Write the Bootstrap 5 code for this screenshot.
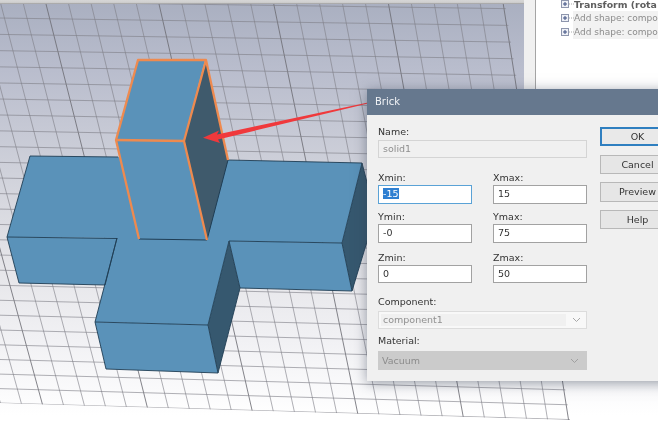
<!doctype html>
<html lang="en">
<head>
<meta charset="utf-8">
<title>Brick</title>
<link href="https://cdn.jsdelivr.net/npm/bootstrap@5.3.0/dist/css/bootstrap.min.css" rel="stylesheet">
<style>
html,body{margin:0;height:100%;overflow:hidden;background:#fff}
.stage{width:658px;height:429px;overflow:hidden;font-family:"DejaVu Sans",sans-serif;font-size:9.5px;
  background:linear-gradient(180deg,#a9afc0 0,#b9bdcd 70px,#cfd1da 170px,#e4e4e8 260px,#f1f1f4 340px,#fbfbfc 395px,#fff 415px)}
.top-rule{height:4px;background:linear-gradient(180deg,#d6d6d6 0,#d0d0d0 60%,#9a9a9a 100%)}
.scene{width:658px;height:425px;filter:blur(.45px)}
.side-pane{top:0;left:524px;width:134px;height:150px;background:#f0f0f0}
.side-inner{margin-left:11px;height:100%;background:#fff;border-left:1px solid #a4a4a4;padding-left:38px;color:#8c8c8c;font-size:9px;filter:blur(.25px)}
.tree-row{height:14px;line-height:14px;white-space:nowrap;overflow:hidden}
.tree-row.strong{font-weight:700;font-size:9.400px;color:#5e5e5e;height:11px;line-height:9px}
.tree-row.shaded{background:#f2f2f2;margin-left:-1px;padding-left:1px}
.plus{position:absolute;left:25px;width:13px;height:9px}
.plus-1{top:0}.plus-2{top:14px}.plus-3{top:28px}
.brick-win{left:367px;top:89px;width:310px;background:#f0f0f0;box-shadow:0 2px 12px rgba(50,60,80,.5);color:#333}
.brick-title{height:26px;background:#66788e;color:#f1f3f6;font-size:10px;line-height:26px;padding-left:8px;filter:blur(.25px)}
.brick-body{padding:10px 0 11px 11px;filter:blur(.25px)}
.fields{width:209px}
.fields .row{--bs-gutter-x:21px}
.cap{display:block;height:14px;line-height:14px;margin-bottom:0}
.fields .form-control,.fields .form-select{font-size:9.5px;border-radius:0;min-height:0;padding:0 4px;height:19px;line-height:16px;color:#333;background-image:none;border:1px solid #a2a2a2;background-color:#fff;box-shadow:none}
.fields .low{height:18px}
.name-gap{margin-bottom:13px}.x-gap{margin-bottom:6px}.y-gap{margin-bottom:8px}.z-gap{margin-bottom:12px}.comp-gap{margin-bottom:5px}
.cap.name-cap{margin-bottom:1px}.cap.comp-cap{margin-bottom:2px}.cap.mat-cap{margin-bottom:3px}
.fields .is-off{background-color:#f0f0f0;border-color:#d4d4d4;color:#8f8f8f}
.fields .is-hot{border-color:#5aa2d6}
.pick{background:#2f7fd1;color:#fff}
.fields .drop-a{background-color:#f8f8f8;border-color:#dcdcdc;color:#909090;padding:2px 2px;line-height:12px}
.drop-fill{background:#f0f0f0;height:100%;flex:1;padding-left:2px;margin-right:2px}
.fields .drop-b{background-color:#cbcbcb;border-color:#cbcbcb;color:#8c8c8c;padding-left:3px}
.chev{width:9px;height:6px;margin:0 3px 0 4px;flex:none}
.actions{margin-left:13px;margin-top:2px;width:75px}
.actions .btn{width:75px;padding:0;font-size:9.5px;border-radius:0;background:#e6e6e6;border:1px solid #b8b8b8;color:#333;line-height:16px;text-align:center}
.actions .btn-a{height:19px;margin-bottom:9px;background:#e9e9e9;border:2px solid #2f7fc0;line-height:15px}
.actions .btn-b{height:19px;margin-bottom:8px}
.actions .btn-c{height:20px;margin-bottom:8px}
.actions .btn-d{height:19px}
</style>
</head>
<body>
<div class="stage position-relative">
  <div class="top-rule"></div>
  <svg class="scene d-block" viewBox="0 4 658 425" xmlns="http://www.w3.org/2000/svg">
    <defs><clipPath id="floor"><polygon points="-2,4 505,4 570,420 -2,403"/></clipPath></defs>
    <g id="grid" clip-path="url(#floor)" fill="none"></g>
    <!-- cross body -->
    <polygon points="229,241 342,243 352,291 240,288" fill="#5a92b9"/>
    <polygon points="7,237 117,238 105,285 19,283" fill="#5a92b9"/>
    <polygon points="95,322 208,325 218,373 106,369" fill="#5a92b9"/>
    <polygon points="229,241 240,288 218,373 208,325" fill="#36586f"/>
    <polygon points="342,243 352,291 369,235 369,190 362,163" fill="#36586f"/>
    <polygon points="30,156 118,157 228,160 362,163 342,243 229,241 208,325 95,322 117,238 7,237" fill="#5a92b9"/>
    <g fill="none" stroke="#1f3d54" stroke-width=".9">
      <path d="M7,237 30,156 118,157M228,160 362,163"/>
      <path d="M7,237 117,238.500M117,238 105,285M7,237 19,283 105,285"/>
      <path d="M229,241 342,243M342,243 352,291 240,288M342,243 362,163 369,190M352,291 369,235"/>
      <path d="M229,241 240,288 218,373 208,325M229,241 208,325"/>
      <path d="M95,322 208,325M95,322 117,238M95,322 106,369 218,373"/>
    </g>
    <!-- selected block -->
    <polygon points="138,60 205,60 184,140 116,140" fill="#5a92b9"/>
    <polygon points="116,140 184,140 207,240 139,239" fill="#5a92b9"/>
    <polygon points="206,61 228,160 207,240 184,140" fill="#3f5a6c"/>
    <path d="M139,239 207,240 228,160" fill="none" stroke="#1f3d54" stroke-width="1"/>
    <g fill="none" stroke="#ee8a4f" stroke-width="2.300" stroke-linejoin="round">
      <path d="M139,239 116,140 138,60 206,60 228,160"/>
      <path d="M116,140 184,141 206,60M184,141 207,240"/>
    </g>
    <!-- pointer -->
    <polygon points="203,137.700 219,130.500 217,134.500 368,102.500 368,103.500 218,139.500 220,143" fill="#f0393c"/>
  </svg>

  <aside class="side-pane position-absolute">
    <div class="side-inner">
      <svg class="plus plus-1" viewBox="0 0 13 9" xmlns="http://www.w3.org/2000/svg"><rect x=".5" y=".5" width="7" height="7" fill="#eef0f6" stroke="#8e96ad"/><path d="M2 4h4M4 2v4" stroke="#3d4f80"/><path d="M8 4h5" stroke="#aaa" stroke-dasharray="1 1"/></svg>
      <svg class="plus plus-2" viewBox="0 0 13 9" xmlns="http://www.w3.org/2000/svg"><rect x=".5" y=".5" width="7" height="7" fill="#eef0f6" stroke="#8e96ad"/><path d="M2 4h4M4 2v4" stroke="#3d4f80"/><path d="M8 4h5" stroke="#aaa" stroke-dasharray="1 1"/></svg>
      <svg class="plus plus-3" viewBox="0 0 13 9" xmlns="http://www.w3.org/2000/svg"><rect x=".5" y=".5" width="7" height="7" fill="#eef0f6" stroke="#8e96ad"/><path d="M2 4h4M4 2v4" stroke="#3d4f80"/><path d="M8 4h5" stroke="#aaa" stroke-dasharray="1 1"/></svg>
      <div class="tree-row strong">Transform (rota</div>
      <div class="tree-row shaded">Add shape: compo</div>
      <div class="tree-row shaded">Add shape: compo</div>
    </div>
  </aside>

  <section class="brick-win position-absolute">
    <div class="brick-title">Brick</div>
    <div class="brick-body d-flex align-items-start">
      <div class="fields">
        <span class="cap name-cap">Name:</span>
        <div class="form-control low is-off name-gap">solid1</div>
        <div class="row x-gap">
          <div class="col-6"><span class="cap">Xmin:</span><div class="form-control is-hot"><span class="pick">-15</span></div></div>
          <div class="col-6"><span class="cap">Xmax:</span><div class="form-control">15</div></div>
        </div>
        <div class="row y-gap">
          <div class="col-6"><span class="cap">Ymin:</span><div class="form-control">-0</div></div>
          <div class="col-6"><span class="cap">Ymax:</span><div class="form-control">75</div></div>
        </div>
        <div class="row z-gap">
          <div class="col-6"><span class="cap">Zmin:</span><div class="form-control low">0</div></div>
          <div class="col-6"><span class="cap">Zmax:</span><div class="form-control low">50</div></div>
        </div>
        <span class="cap comp-cap">Component:</span>
        <div class="form-select low drop-a d-flex align-items-center comp-gap">
          <div class="drop-fill">component1</div>
          <svg class="chev" viewBox="0 0 9 6" xmlns="http://www.w3.org/2000/svg"><path d="M1 1l3.500 3.500L8 1" fill="none" stroke="#a8a8a8"/></svg>
        </div>
        <span class="cap mat-cap">Material:</span>
        <div class="form-select drop-b d-flex align-items-center justify-content-between">
          <span>Vacuum</span>
          <svg class="chev" viewBox="0 0 9 6" xmlns="http://www.w3.org/2000/svg"><path d="M1 1l3.500 3.500L8 1" fill="none" stroke="#a0a0a0"/></svg>
        </div>
      </div>
      <div class="actions d-flex flex-column">
        <button type="button" class="btn btn-a">OK</button>
        <button type="button" class="btn btn-b">Cancel</button>
        <button type="button" class="btn btn-c">Preview</button>
        <button type="button" class="btn btn-d">Help</button>
      </div>
    </div>
  </section>
</div>
<script>
(function(){
  var ns='http://www.w3.org/2000/svg',g=document.getElementById('grid');
  function add(x1,y1,x2,y2,dark){
    var l=document.createElementNS(ns,'line');
    l.setAttribute('x1',x1);l.setAttribute('y1',y1);l.setAttribute('x2',x2);l.setAttribute('y2',y2);
    l.setAttribute('stroke',dark?'#6e6f76':'#7f8088');
    l.setAttribute('stroke-opacity',dark?'.85':'.62');
    l.setAttribute('stroke-width','1');
    g.appendChild(l);
  }
  for(var k=0;k<=27;k++){
    var top=k>12?159+22.95*(k-12):159-22.6*(12-k);
    var bot=k>12?252+21*(k-12):252-20.8*(12-k);
    var s=(bot-top)/406;
    add(top,4,top+s*416,420,k%5===2);
  }
  for(var n=0;n<=26;n++){
    var y=403-14.4*n-0.04*n*n, m=0.029-0.00058*n;
    add(-2,y,600,y+m*602,false);
  }
})();
</script>
<script src="https://cdn.jsdelivr.net/npm/bootstrap@5.3.0/dist/js/bootstrap.bundle.min.js"></script>
</body>
</html>
